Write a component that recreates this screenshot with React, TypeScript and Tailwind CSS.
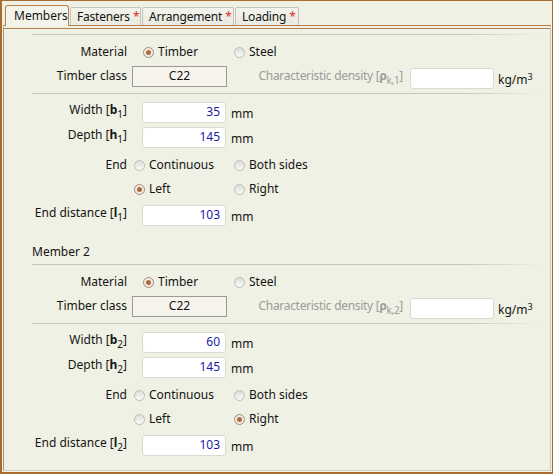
import React from 'react';

function Radio({ checked }: { checked: boolean }) {
  return checked ? (
    <span className="w-[11px] h-[11px] rounded-full border border-[#a38c77] bg-[#f2ebe3] flex items-center justify-center shrink-0">
      <span className="w-[5px] h-[5px] rounded-full bg-[#a9703f]" />
    </span>
  ) : (
    <span className="w-[11px] h-[11px] rounded-full border border-[#bdbdb8] bg-linear-to-b from-[#dcdcd8] to-[#fbfbfa] shrink-0" />
  );
}

function Option({ label, checked, width }: { label: string; checked: boolean; width: string }) {
  return (
    <div className={`flex items-center gap-[4px] shrink-0 ${width}`}>
      <Radio checked={checked} />
      <span>{label}</span>
    </div>
  );
}

function Sub({ children }: { children: React.ReactNode }) {
  return <span className="text-[10px] relative top-[4px]">{children}</span>;
}

function Row({ label, className = '', children }: { label: React.ReactNode; className?: string; children?: React.ReactNode }) {
  return (
    <div className={`flex items-center h-[24px] ${className}`}>
      <div className="w-[95px] shrink-0 text-right whitespace-nowrap">{label}</div>
      {children}
    </div>
  );
}

function Separator({ className = '' }: { className?: string }) {
  return <div className={`h-px w-[508px] bg-linear-to-r from-[#c5c6bd] via-[#c5c6bd] via-85% to-transparent ${className}`} />;
}

function NumberBox({ value }: { value: string }) {
  return (
    <div className="ml-[15px] w-[84px] h-[21px] rounded-[3px] border border-[#dadad5] bg-white flex items-center justify-end pr-[5px] text-[#1a1aa8]">
      {value}
    </div>
  );
}

function Member({ n, width, depth, end, dist }: { n: number; width: string; depth: string; end: 'left' | 'right'; dist: string }) {
  return (
    <div>
      <Row label="Material" className="mt-[5px]">
        <div className="ml-[16px] flex">
          <Option label="Timber" checked width="w-[91px]" />
          <Option label="Steel" checked={false} width="w-[60px]" />
        </div>
      </Row>
      <Row label="Timber class">
        <div className="ml-[5px] w-[95px] h-[21px] border border-[#9b9b96] bg-[#f7f4ee] flex items-center justify-center">C22</div>
        <span className="w-[176px] text-right text-[#9c9c98] whitespace-nowrap tracking-[-0.3px]">
          Characteristic density [<b>ρ</b>
          <Sub>k,{n}</Sub>]
        </span>
        <div className="ml-[7px] w-[84px] h-[21px] rounded-[3px] border border-[#dadad5] bg-white translate-y-[2px]" />
        <span className="ml-[4px] translate-y-[4px]">
          kg/m<sup className="text-[9px] relative -top-[4px] align-baseline">3</sup>
        </span>
      </Row>
      <Separator className="mt-[5px]" />
      <Row
        label={
          <span className="relative -top-[2px]">
            Width [<b>b</b>
            <Sub>{n}</Sub>]
          </span>
        }
        className="mt-[6px]"
      >
        <NumberBox value={width} />
        <span className="ml-[5px] translate-y-[2px]">mm</span>
      </Row>
      <Row
        label={
          <span className="relative -top-[2px]">
            Depth [<b>h</b>
            <Sub>{n}</Sub>]
          </span>
        }
        className="mt-[1px]"
      >
        <NumberBox value={depth} />
        <span className="ml-[5px] translate-y-[2px]">mm</span>
      </Row>
      <Row label="End" className="mt-[4px]">
        <div className="ml-[7px] flex">
          <Option label="Continuous" checked={false} width="w-[100px]" />
          <Option label="Both sides" checked={false} width="w-[90px]" />
        </div>
      </Row>
      <Row label="">
        <div className="ml-[7px] flex">
          <Option label="Left" checked={end === 'left'} width="w-[100px]" />
          <Option label="Right" checked={end === 'right'} width="w-[90px]" />
        </div>
      </Row>
      <Row
        label={
          <span className="relative -top-[2px]">
            End distance [<b>l</b>
            <Sub>{n}</Sub>]
          </span>
        }
        className="mt-[2px]"
      >
        <NumberBox value={dist} />
        <span className="ml-[5px] translate-y-[2px]">mm</span>
      </Row>
    </div>
  );
}

function Tab({ label, active, star, width }: { label: string; active?: boolean; star?: boolean; width: string }) {
  return active ? (
    <div className={`${width} h-[21px] -mb-px relative z-10 border border-b-0 border-[#b7804a] rounded-t-[3px] bg-[#f3f4ea] pl-[8px] flex items-center`}>
      {label}
    </div>
  ) : (
    <div className={`${width} h-[18px] border border-b-0 border-[#c4c4bb] rounded-t-[2px] bg-linear-to-b from-[#f4f4ee] to-[#e9eae0] pl-[6px] flex items-center tracking-[-0.2px]`}>
      {label}
      {star && <span className="text-[#e0282c] ml-[3px]">*</span>}
    </div>
  );
}

export default function App() {
  return (
    <div className="w-[553px] h-[474px] border border-l-2 border-b-2 border-[#a86c32] bg-[#eff1e4] font-['Noto_Sans',sans-serif] text-[12px] leading-none text-[#141414] flex flex-col overflow-hidden">
      <div className="flex items-end pt-[4px] pl-[3px] gap-[1px]">
        <Tab label="Members" active width="w-[64px]" />
        <Tab label="Fasteners" star width="w-[71px]" />
        <Tab label="Arrangement" star width="w-[92px]" />
        <Tab label="Loading" star width="w-[64px]" />
      </div>
      <div className="flex-1 ml-px mb-px mr-px border-t-4 border-double border-[#b7804a] border-l border-r border-b border-l-[#b9936c] border-r-[#cfc9b8] border-b-[#d3cfc2] pl-[28px] pt-[5px]">
        <Separator />
        <Member n={1} width="35" depth="145" end="left" dist="103" />
        <div className="h-[24px] mt-[13px] flex items-center">Member 2</div>
        <Separator />
        <Member n={2} width="60" depth="145" end="right" dist="103" />
      </div>
    </div>
  );
}
